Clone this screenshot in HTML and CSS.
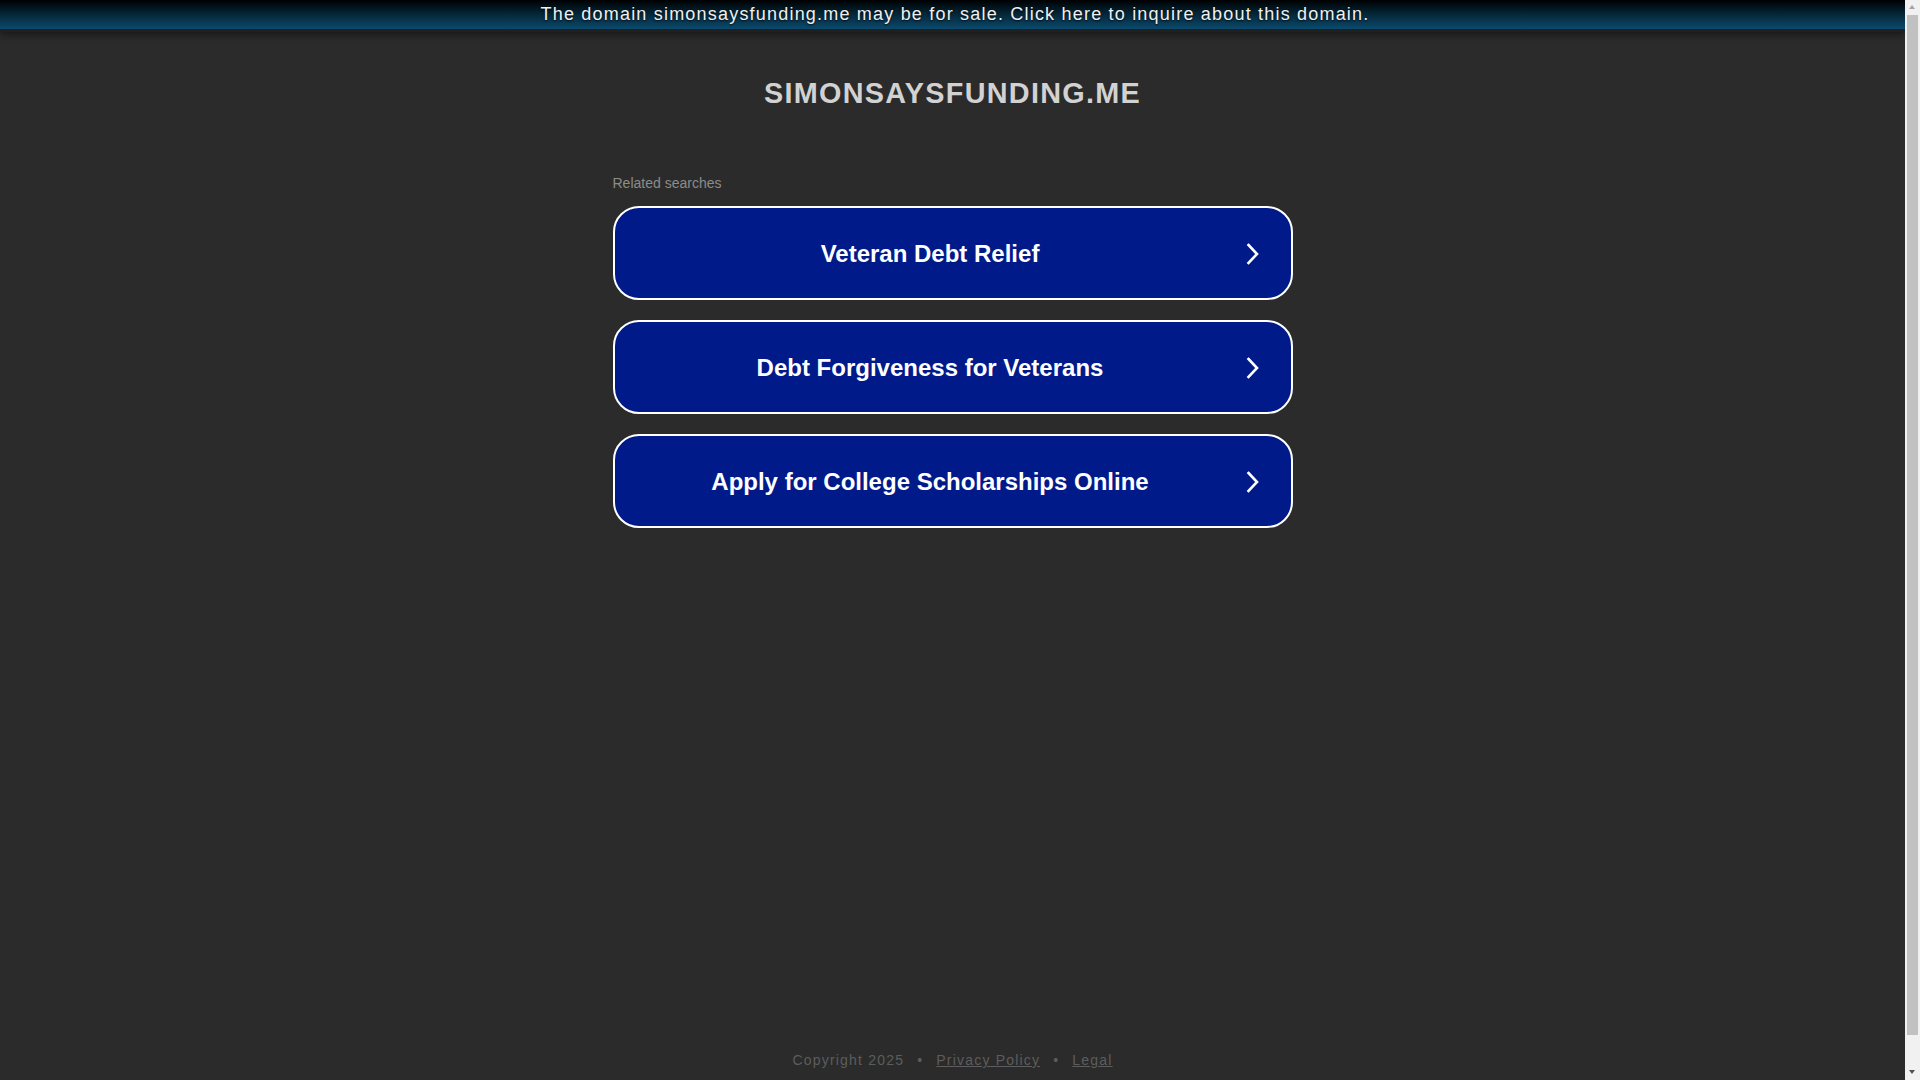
FILE: index.html
```
<!DOCTYPE html>
<html lang="en">
<head>
<meta charset="utf-8">
<title>simonsaysfunding.me</title>
<link rel="stylesheet" href="styles.css">
</head>
<body>
<div class="page">
  <a class="banner" href="#">The domain simonsaysfunding.me may be for sale. Click here to inquire about this domain.</a>
  <main class="main">
    <h1 class="domain">SIMONSAYSFUNDING.ME</h1>
    <section class="related">
      <div class="related-label">Related searches</div>
      <a class="search-btn" href="#">
        <span class="search-text">Veteran Debt Relief</span>
        <svg class="chev" width="14" height="22" viewBox="0 0 14 22"><polyline points="2.5,2 11,11 2.5,20" fill="none" stroke="#fff" stroke-width="2.6" stroke-linecap="square"/></svg>
      </a>
      <a class="search-btn" href="#">
        <span class="search-text">Debt Forgiveness for Veterans</span>
        <svg class="chev" width="14" height="22" viewBox="0 0 14 22"><polyline points="2.5,2 11,11 2.5,20" fill="none" stroke="#fff" stroke-width="2.6" stroke-linecap="square"/></svg>
      </a>
      <a class="search-btn" href="#">
        <span class="search-text">Apply for College Scholarships Online</span>
        <svg class="chev" width="14" height="22" viewBox="0 0 14 22"><polyline points="2.5,2 11,11 2.5,20" fill="none" stroke="#fff" stroke-width="2.6" stroke-linecap="square"/></svg>
      </a>
    </section>
  </main>
  <footer class="footer">
    <span>Copyright 2025</span>
    <span class="dot">•</span>
    <a href="#">Privacy Policy</a>
    <span class="dot">•</span>
    <a href="#">Legal</a>
  </footer>
</div>
<div class="scrollbar" aria-hidden="true">
  <span class="arrow-up"></span>
  <span class="thumb"></span>
  <span class="arrow-down"></span>
</div>
</body>
</html>
```

FILE: styles.css
```
html, body {
  margin: 0;
  padding: 0;
}
body {
  background: #2b2b2b;
  font-family: "Liberation Sans", Arial, sans-serif;
  overflow: hidden;
}
.page {
  display: flex;
  flex-direction: column;
  min-height: 100vh;
  margin-right: 15px;
}
.banner {
  display: block;
  height: 26px;
  line-height: 26px;
  padding: 1px 0 2px 5px;
  background: linear-gradient(to bottom, #000000 0%, #03202f 40%, #0b4a6d 100%);
  border-bottom: 3px solid #1f1f1f;
  box-shadow: 0 2px 10px rgba(0, 0, 0, 0.55);
  color: #f0f0f0;
  font-size: 18px;
  letter-spacing: 1.2px;
  text-align: center;
  text-decoration: none;
  text-shadow: 0 1px 2px rgba(0, 0, 0, 0.8);
}
.main {
  flex: 1;
  display: flex;
  flex-direction: column;
  align-items: center;
}
.domain {
  margin: 45px 0 0;
  font-size: 28.8px;
  font-weight: bold;
  letter-spacing: 1.3px;
  color: #d2d2d2;
  line-height: normal;
}
.related {
  width: 680px;
  margin-top: 65px;
}
.related-label {
  font-size: 14px;
  color: #8c8c8c;
  margin-bottom: 15px;
}
.search-btn {
  display: flex;
  align-items: center;
  box-sizing: border-box;
  height: 94px;
  margin-bottom: 20px;
  padding: 2px 31px 0 0;
  background: #011a8a;
  border: 2px solid #ffffff;
  border-radius: 26px;
  color: #ffffff;
  text-decoration: none;
}
.search-text {
  flex: 1;
  text-align: center;
  font-size: 24px;
  font-weight: bold;
}
.chev {
  display: block;
  flex: none;
}
.footer {
  display: flex;
  justify-content: center;
  align-items: center;
  padding-bottom: 12px;
  font-size: 14px;
  letter-spacing: 1.2px;
  color: #5d5d5d;
}
.footer a {
  color: #5d5d5d;
  text-decoration: underline;
}
.dot {
  margin: 0 13px;
}
.scrollbar {
  position: fixed;
  top: 0;
  right: 0;
  width: 15px;
  height: 100vh;
  background: #f1f1f1;
}
.arrow-up {
  position: absolute;
  top: 5px;
  left: 4px;
  width: 0;
  height: 0;
  border-left: 3.5px solid transparent;
  border-right: 3.5px solid transparent;
  border-bottom: 4px solid #a3a3a3;
}
.thumb {
  position: absolute;
  top: 15px;
  bottom: 45px;
  left: 2px;
  right: 2px;
  background: #c1c1c1;
}
.arrow-down {
  position: absolute;
  bottom: 6px;
  left: 4px;
  width: 0;
  height: 0;
  border-left: 3.5px solid transparent;
  border-right: 3.5px solid transparent;
  border-top: 4px solid #505050;
}
```
